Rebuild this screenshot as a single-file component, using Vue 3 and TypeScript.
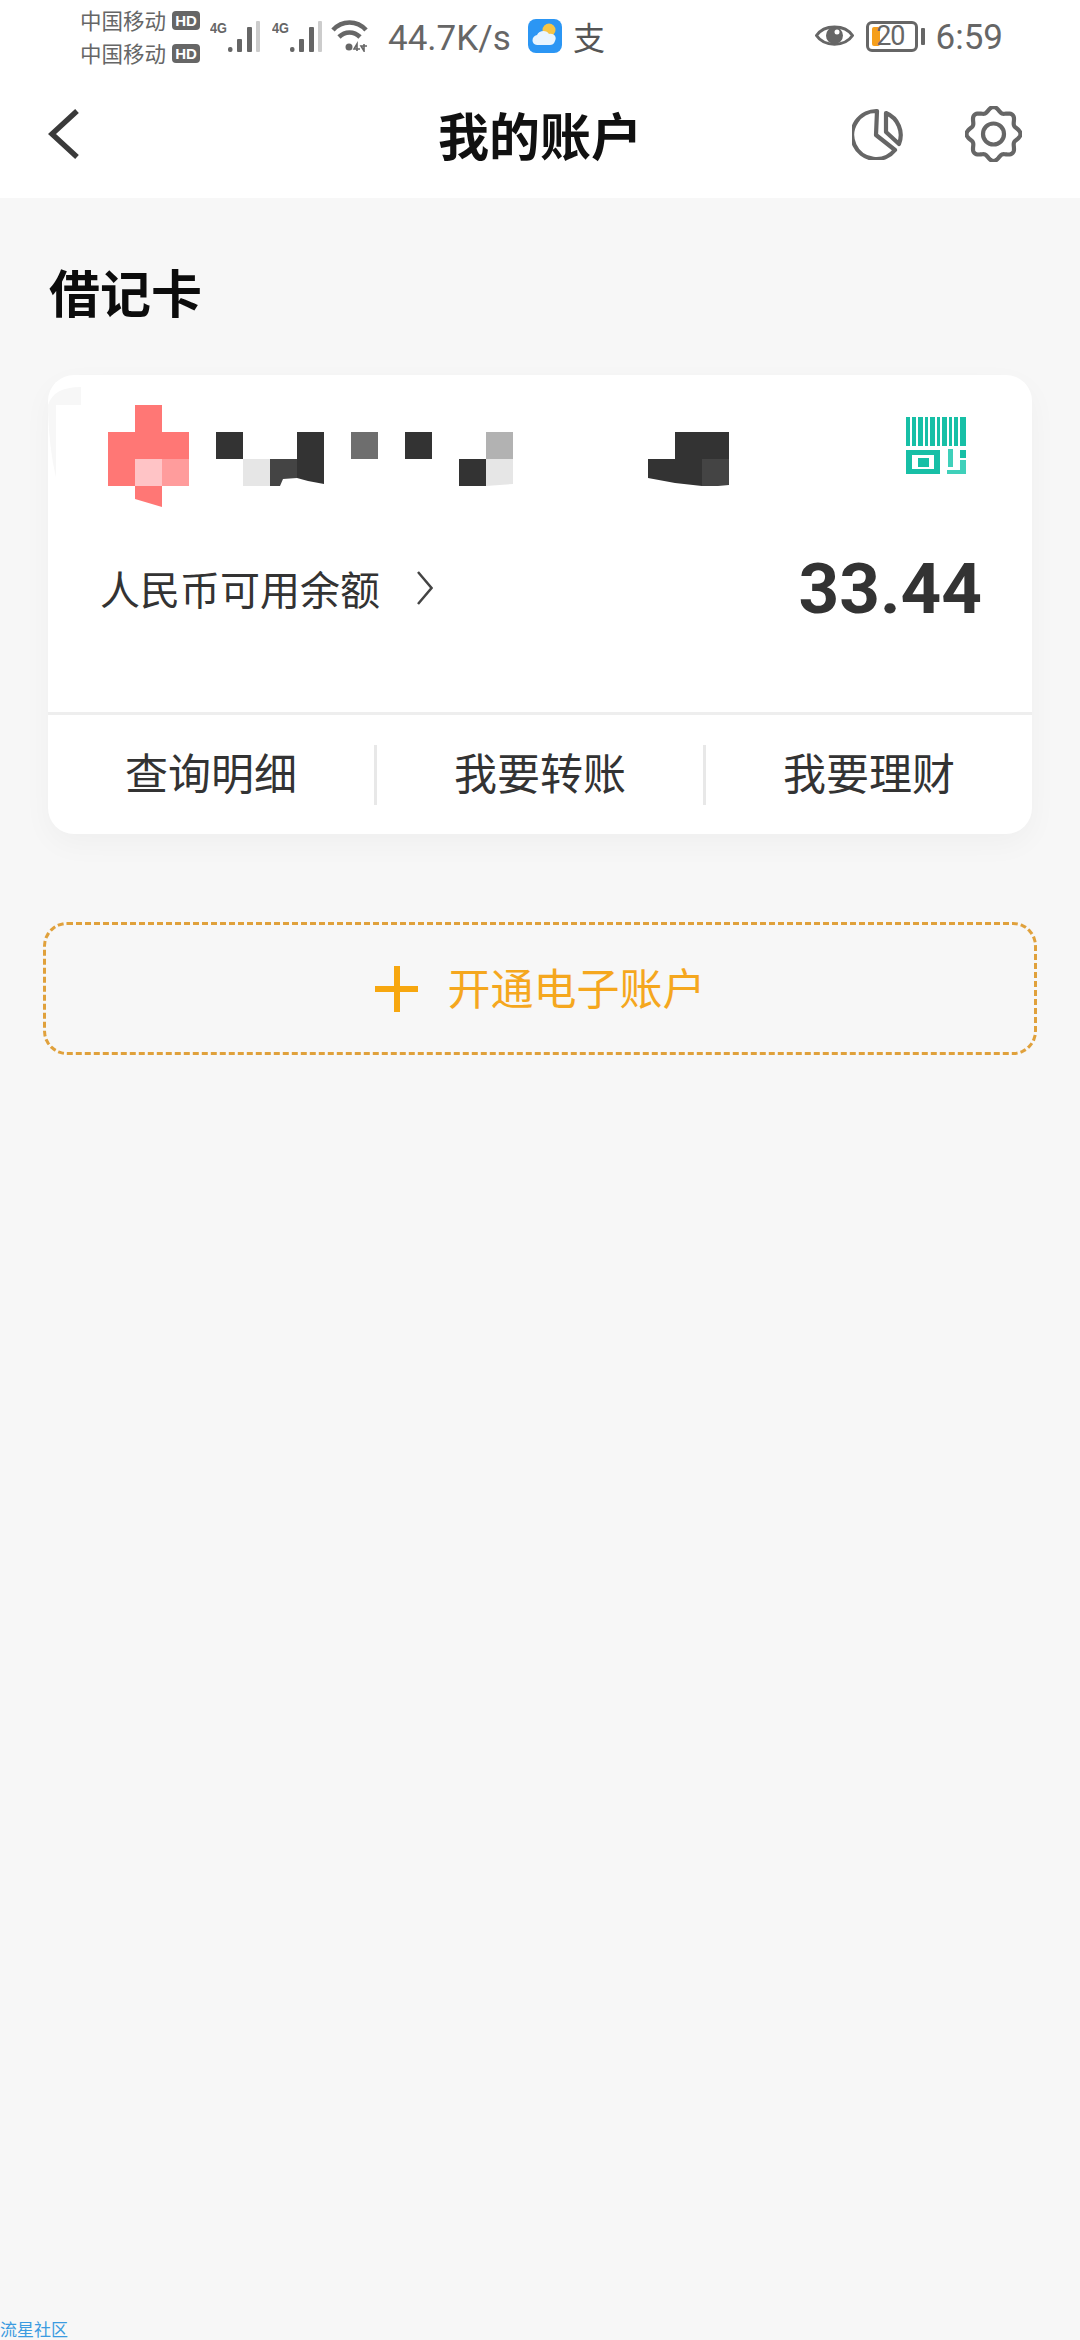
<script setup lang="ts">
// mosaic blocks over the blurred card name: x, y, w, h, colour
const blocks: [number, number, number, number, string][] = [
  [27, 0, 27, 27, '#ff7775'],
  [0, 27, 81, 27, '#ff7775'],
  [0, 54, 27, 27, '#ff7775'],
  [27, 54, 27, 27, '#ffc4c6'],
  [54, 54, 27, 27, '#ff9c9c'],
  [108, 27, 27, 27, '#333333'],
  [135, 54, 27, 27, '#e6e6e6'],
  [243, 27, 27, 27, '#6e6e6e'],
  [297, 27, 27, 27, '#333333'],
  [378, 27, 27, 27, '#b2b2b2'],
  [351, 54, 27, 27, '#333333'],
  [567, 27, 54, 27, '#333333'],
]
const shapes: [string, string][] = [
  ['27,81 54,81 54,102 27,94', '#ff7775'],
  ['162,54 189,54 189,73 175,74 172,81 162,81', '#444444'],
  ['189,27 216,27 216,79 200,76 189,73', '#333333'],
  ['378,54 405,54 405,79 378,81', '#e6e6e6'],
  ['540,54 567,54 567,78 540,73', '#333333'],
  ['567,54 594,54 594,81 567,78', '#333333'],
  ['594,54 621,54 621,80 610,81 594,81', '#444444'],
]

const barcode = [0, 6, 12, 19, 24, 31, 36, 43, 48, 54]
const barWidths = [4, 4, 5, 3, 5, 3, 5, 3, 4, 6]

const actions = ['查询明细', '我要转账', '我要理财']

const gearPath = (() => {
  const pts: string[] = []
  for (let i = 0; i < 160; i++) {
    const a = (i / 160) * Math.PI * 2
    const r = 24.6 + 2.4 * Math.cos(8 * a)
    pts.push(`${(28.5 + r * Math.sin(a)).toFixed(2)} ${(28 - r * Math.cos(a)).toFixed(2)}`)
  }
  return 'M' + pts.join('L') + 'Z'
})()
</script>

<template>
  <div class="page">
    <header class="top">
      <div class="status">
        <div class="status-left">
          <div class="carriers">
            <div class="carrier"><span>中国移动</span><b class="hd">HD</b></div>
            <div class="carrier"><span>中国移动</span><b class="hd">HD</b></div>
          </div>
          <svg v-for="n in 2" :key="n" class="signal" width="50" height="37" viewBox="0 -5 50 37">
            <text x="0" y="12" class="net" textLength="17" lengthAdjust="spacingAndGlyphs">4G</text>
            <rect x="18" y="26" width="4.5" height="5" rx="2" fill="#666" />
            <rect x="27" y="18" width="5" height="13" rx="1" fill="#666" />
            <rect x="37" y="6" width="5" height="25" rx="1" fill="#666" />
            <rect x="46" y="0" width="4" height="31" rx="1" fill="#ccc" />
          </svg>
          <svg class="wifi" width="37" height="32" viewBox="0 0 37 32" fill="none" stroke="#666" stroke-width="4.6">
            <path d="M2 10C11 0 26 0 35 10" />
            <path d="M8 17C14 11 23 11 29 17" />
            <circle cx="18" cy="27" r="3.5" fill="#666" stroke="none" />
            <path d="M26 31V24L23 29H29M33 24V31L30 26H36" stroke-width="1.6" />
          </svg>
          <span class="speed">44.7K/s</span>
          <svg class="weather" width="34" height="34" viewBox="0 0 34 34">
            <rect width="34" height="34" rx="8" fill="#2b96f4" />
            <circle cx="21" cy="11" r="6.5" fill="#f6c545" />
            <path d="M9 26C3 26 3 17 9 16C11 11 19 11 21 15C27 14 29 19 27 22C26 25 24 26 22 26Z" fill="#e9f5fe" />
          </svg>
          <span class="pay">支</span>
        </div>
        <div class="status-right">
          <svg width="39" height="25" viewBox="0 0 39 25">
            <path d="M1.5 12.5C9 1 30 1 37.5 12.5C30 24 9 24 1.5 12.5Z" fill="none" stroke="#666" stroke-width="3" />
            <circle cx="19.5" cy="12.5" r="8.5" fill="#666" />
            <circle cx="22" cy="9" r="2.5" fill="#fff" />
          </svg>
          <div class="battery">
            <i class="level"></i>
            <span>20</span>
          </div>
          <i class="nub"></i>
          <span class="clock">6:59</span>
        </div>
      </div>
      <nav class="nav">
        <svg class="back" width="32" height="50" viewBox="0 0 32 50" fill="none" stroke="#3a3a3a" stroke-width="5.4">
          <path d="M30 2L5 25L30 48" />
        </svg>
        <h1>我的账户</h1>
        <div class="nav-icons">
          <svg width="52" height="52" viewBox="0 0 52 52" fill="none" stroke="#666" stroke-width="4.2" stroke-linejoin="round">
            <path d="M25 3A24 24 0 1 0 43 42L24 27Z" />
            <path d="M34 5A24 24 0 0 1 47 36L34 24Z" />
          </svg>
          <svg width="57" height="56" viewBox="0 0 57 56" fill="none" stroke="#666" stroke-width="4.2">
            <path :d="gearPath" />
            <circle cx="28.5" cy="28" r="10.5" />
          </svg>
        </div>
      </nav>
    </header>

    <main>
      <h2>借记卡</h2>
      <section class="card">
        <svg class="smudge" width="34" height="90" viewBox="0 0 34 90">
          <path d="M0 18C4 6 14 0 33 0V18H8V90C3 70 0 40 0 18Z" fill="#f7f7f7" />
        </svg>
        <div class="card-head">
          <svg width="621" height="102" viewBox="0 0 621 102">
            <rect v-for="(b, i) in blocks" :key="i" :x="b[0]" :y="b[1]" :width="b[2]" :height="b[3]" :fill="b[4]" />
            <polygon v-for="(s, i) in shapes" :key="'s' + i" :points="s[0]" :fill="s[1]" />
          </svg>
          <svg class="qr" width="60" height="57" viewBox="0 0 60 57">
            <rect v-for="(x, i) in barcode" :key="i" :x="x" y="0" :width="barWidths[i]" height="29" fill="#17bfa6" />
            <path fill-rule="evenodd" d="M0 33H34V57H0ZM6 38V52H28V38Z" fill="#17bfa6" />
            <rect x="12" y="41" width="11" height="9" fill="#17bfa6" />
            <rect x="42" y="32" width="5" height="18" fill="#3fd0ba" />
            <rect x="54" y="33" width="6" height="8" fill="#17bfa6" />
            <rect x="54" y="43" width="6" height="14" fill="#3fd0ba" />
            <rect x="41" y="53" width="19" height="4" fill="#3fd0ba" />
          </svg>
        </div>
        <div class="balance">
          <span class="balance-label">人民币可用余额</span>
          <svg class="more" width="16" height="34" viewBox="0 0 16 34" fill="none" stroke="#444" stroke-width="2.5">
            <path d="M1 1L14.5 17L1 33" />
          </svg>
          <strong>33.44</strong>
        </div>
        <div class="actions">
          <div v-for="a in actions" :key="a" class="action">{{ a }}</div>
        </div>
      </section>

      <div class="open">
        <svg width="43" height="46" viewBox="0 0 43 46">
          <rect x="0" y="20" width="43" height="6" fill="#f7a70f" />
          <rect x="19" y="0" width="6" height="46" fill="#f7a70f" />
        </svg>
        <span>开通电子账户</span>
      </div>
    </main>

    <span class="mark">流星社区</span>
  </div>
</template>

<style>
html,
body {
  margin: 0;
  background: #f7f7f7;
}
</style>

<style scoped>
.page {
  position: relative;
  width: 1080px;
  height: 2340px;
  overflow: hidden;
  background: #f7f7f7;
  font-family: "Noto Sans CJK SC", "Noto Sans", sans-serif;
  color: #333;
}

.top {
  background: #fff;
  height: 198px;
}

.status {
  height: 72px;
  box-sizing: border-box;
  padding: 0 77px 0 80px;
  display: flex;
  justify-content: space-between;
  color: #666;
}

.status-left,
.status-right {
  display: flex;
  align-items: flex-start;
}

.carriers {
  display: flex;
  flex-direction: column;
  gap: 11px;
  padding-top: 9px;
  margin-right: 10px;
}

.carrier {
  display: flex;
  align-items: center;
  height: 22px;
  font-size: 21.5px;
  line-height: 22px;
  gap: 6px;
}

.hd {
  width: 28px;
  height: 19px;
  border-radius: 4px;
  background: #666;
  color: #fff;
  font: bold 15px/19px "Liberation Sans", sans-serif;
  text-align: center;
}

.signal {
  margin: 16px 12px 0 0;
}

.net {
  font: bold 15px "Liberation Sans", sans-serif;
  fill: #666;
}

.signal + .wifi {
  margin: 20px 0 0 -3px;
}

.speed {
  font: 400 35px/42px Roboto, sans-serif;
  margin: 18px 0 0 20px;
  width: 120px;
  white-space: nowrap;
}

.weather {
  margin: 19px 0 0 20px;
}

.pay {
  font-size: 32px;
  line-height: 42px;
  margin: 15px 0 0 11px;
  color: #555;
}

.status-right > svg {
  margin: 23px 12px 0 0;
}

.battery {
  position: relative;
  width: 52px;
  height: 31px;
  box-sizing: border-box;
  margin-top: 21px;
  border: 3px solid #666;
  border-radius: 6px;
  font: 400 27px/25px Roboto, sans-serif;
  letter-spacing: -1px;
  text-align: right;
  padding-right: 10px;
}

.level {
  position: absolute;
  left: 3px;
  top: 3px;
  width: 8px;
  height: 19px;
  border-radius: 2px;
  background: #f59f1b;
}

.battery span {
  position: relative;
}

.nub {
  width: 4px;
  height: 17px;
  margin: 28px 11px 0 3px;
  border-radius: 1px;
  background: #666;
}

.clock {
  font: 400 35px/40px Roboto, sans-serif;
  margin-top: 18px;
}

.nav {
  height: 126px;
  display: grid;
  grid-template-columns: 1fr auto 1fr;
  align-items: center;
}

.back {
  margin-left: 47px;
  margin-top: -2px;
}

h1 {
  margin: -2px 0 0;
  font-size: 51px;
  line-height: 60px;
  font-weight: 700;
  color: #111;
}

.nav-icons {
  display: flex;
  justify-content: flex-end;
  align-items: center;
  gap: 61px;
  padding-right: 58px;
  margin-top: -2px;
}

h2 {
  margin: 63px 0 54px 49px;
  font-size: 51px;
  line-height: 60px;
  font-weight: 700;
  color: #0c0c0c;
}

.card {
  position: relative;
  margin: 0 48px;
  height: 459px;
  background: #fff;
  border-radius: 26px;
  box-shadow: 0 10px 30px rgba(0, 0, 0, 0.035);
  display: flex;
  flex-direction: column;
}

.smudge {
  position: absolute;
  left: 0;
  top: 12px;
}

.card-head {
  display: flex;
  justify-content: space-between;
  align-items: flex-start;
  padding: 30px 66px 0 60px;
}

.qr {
  margin-top: 12px;
}

.balance {
  display: flex;
  align-items: center;
  height: 80px;
  margin-top: 41px;
  padding: 0 50px 0 52px;
}

.balance-label {
  font-size: 40px;
  line-height: 56px;
  color: #333;
}

.more {
  margin-left: 37px;
}

.balance strong {
  margin-left: auto;
  font: 700 71px/80px Roboto, sans-serif;
  color: #333;
  position: relative;
  top: 1px;
}

.actions {
  margin-top: 84px;
  border-top: 3px solid #eee;
  flex: 1;
  display: flex;
  align-items: center;
}

.action {
  flex: 1;
  height: 60px;
  box-sizing: border-box;
  padding-bottom: 8px;
  display: flex;
  align-items: center;
  justify-content: center;
  font-size: 43px;
  color: #333;
}

.action + .action {
  border-left: 3px solid #e8e8e8;
}

.open {
  margin: 88px 43px 0;
  height: 133px;
  box-sizing: border-box;
  border: 3px dashed #e0a13c;
  border-radius: 24px;
  display: flex;
  justify-content: center;
  align-items: center;
  gap: 30px;
  color: #f5a71e;
  font-size: 43px;
}

.open span {
  margin-top: -5px;
}

.mark {
  position: absolute;
  left: 0;
  top: 2318px;
  font-size: 17px;
  line-height: 22px;
  color: #3b9be0;
}
</style>
